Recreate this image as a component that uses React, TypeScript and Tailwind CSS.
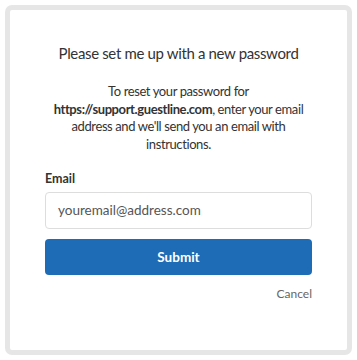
export default function App() {
  return (
    <div className="w-[357px] h-[360px] bg-white p-[5px] font-['Lato',sans-serif]">
      <div className="h-[350px] border-[5px] border-[#e6e6e6] rounded-[7px] bg-white flex flex-col items-center pt-[33px] px-[35px]">
        <h1 className="text-[15px] leading-[20px] tracking-[-0.35px] text-[#333] text-center whitespace-nowrap">Please set me up with a new password</h1>
        <p className="mt-[20px] text-[13px] leading-[17.5px] tracking-[-0.4px] text-[#333] text-center w-full">
          To reset your password for<br />
          <span className="font-bold">https://support.guestline.com</span>, enter your email address and we'll send you an email with instructions.
        </p>
        <div className="w-full mt-[18px]">
          <label className="block text-[12.5px] font-bold text-[#333] leading-[16px]">Email</label>
          <div className="mt-[5px] h-[37px] border border-[#ddd] rounded-[4px] flex items-center px-[12px] text-[13.5px] text-[#555]">
            youremail@address.com
          </div>
          <button className="mt-[10px] w-full h-[36px] bg-[#1e6cb6] rounded-[4px] text-white font-bold text-[13.5px]">Submit</button>
          <div className="mt-[11px] text-right text-[12px] leading-[16px] text-[#666]">Cancel</div>
        </div>
      </div>
    </div>
  );
}
